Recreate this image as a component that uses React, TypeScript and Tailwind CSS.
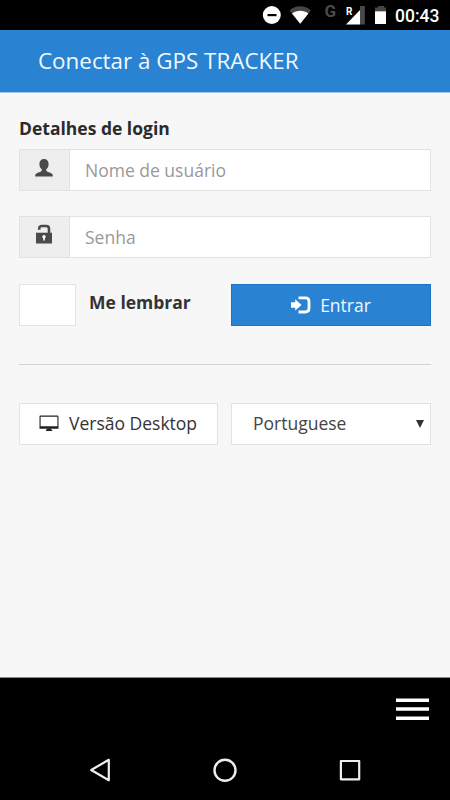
import type { ReactNode } from 'react';

function StatusBar() {
  return (
    <div className="flex h-[30px] shrink-0 items-center justify-end bg-black pr-[10px]">
      <svg width="124" height="30" viewBox="262 0 124 30">
        <circle cx="271.8" cy="15" r="9" fill="#fff" />
        <rect x="267.5" y="14" width="9" height="2.2" fill="#000" />
        <path d="M289.5 10.4C295.8 4.8 304.6 4.8 310.9 10.4L300.2 23.8Z" fill="#464646" />
        <path d="M292 13.5C297 9.7 303.4 9.7 308.4 13.5L300.2 23.8Z" fill="#fff" />
        <text x="324.5" y="16.8" fill="#4a4a4a" fontFamily="Roboto" fontSize="17" fontWeight="700">G</text>
        <path d="M360 6V24.5H364.8V6Z" fill="#4a4a4a" />
        <path d="M346 24.5L360 10V24.5Z" fill="#fff" />
        <text x="346" y="14.7" fill="#fff" fontFamily="Roboto" fontSize="10" fontWeight="700">R</text>
        <path d="M375 7.5H378V6H384V7.5H386.8V11.5H375Z" fill="#464646" />
        <rect x="375" y="11.3" width="12" height="12.7" fill="#fff" />
      </svg>
      <span className="ml-[9px] w-[45px] whitespace-nowrap pt-px font-[Roboto] text-[17.5px] font-medium leading-[30px] text-white">00:43</span>
    </div>
  );
}

function UserIcon() {
  return (
    <svg width="18" height="18" viewBox="0 0 18 18" fill="#4a4a4a">
      <path d="M9 0C6 0 4.4 2 4.4 5.1C4.4 7.5 5.300 9.300 6.700 10.300C7 11.500 6.600 12.300 5.500 12.700L2.200 14C.9 14.500.2 15.300.2 17.400H17.800C17.800 15.300 17.100 14.500 15.800 14L12.500 12.700C11.400 12.300 11 11.500 11.300 10.300C12.700 9.300 13.600 7.500 13.600 5.100C13.600 2 12 0 9 0Z" />
    </svg>
  );
}

function UnlockIcon() {
  return (
    <svg width="16" height="20" viewBox="0 0 16 20">
      <path d="M3.2 5.700V4.800Q3.200 2 6 2H10.200Q13 2 13 4.800V9" fill="none" stroke="#4a4a4a" strokeWidth="2.600" />
      <path d="M0 8.700H16V19.500H0Z" fill="#4a4a4a" />
      <circle cx="8" cy="12.800" r="1.700" fill="#fff" />
      <path d="M7.300 13H8.900V16.500H7.300Z" fill="#fff" />
    </svg>
  );
}

function LoginIcon() {
  return (
    <svg width="20" height="18" viewBox="0 0 20 18">
      <path d="M0 6.300H4.200V3.300L10.600 9L4.200 14.500V11.700H0Z" fill="#fff" />
      <path d="M7.500 1.900H14.300Q18 1.900 18 5.200V12.600Q18 16 14.300 16H7.500" fill="none" stroke="#fff" strokeWidth="2.800" />
    </svg>
  );
}

function DesktopIcon() {
  return (
    <svg width="20" height="17" viewBox="0 0 20 17" fill="#222">
      <path fillRule="evenodd" d="M1.300.5H18.300Q19.500.5 19.500 1.700V13.700H.5V1.700Q.5.500 1.300.5ZM1.600 1.700V11.200H18.400V1.700Z" />
      <path d="M7.700 13.500H12.300V14.800H13.200V16H7V14.800H7.700Z" />
    </svg>
  );
}

function Field({ icon, placeholder, type }: { icon: ReactNode; placeholder: string; type: string }) {
  return (
    <div className="flex h-[42px] border border-[#e2e2e2] bg-white">
      <div className="flex w-[50px] shrink-0 justify-center border-r border-[#e2e2e2] bg-[#eee]">{icon}</div>
      <input
        type={type}
        placeholder={placeholder}
        className="min-w-0 flex-1 px-[15px] text-[17.5px] outline-none placeholder:text-[#999]"
      />
    </div>
  );
}

export default function App() {
  return (
    <div className="flex h-[800px] w-[450px] flex-col overflow-hidden bg-[#f7f7f7] font-['Open_Sans',sans-serif] text-[#333]">
      <StatusBar />
      <header className="flex h-[63px] shrink-0 items-center border-b border-[#a3c9ea] bg-[#2a82d2] pl-[38px]">
        <h1 className="whitespace-nowrap text-[22.4px] text-[#effaff]">Conectar à GPS TRACKER</h1>
      </header>

      <main className="flex flex-1 flex-col px-[19px] pt-[22px]">
        <h2 className="mb-[8px] text-[17.5px] font-bold leading-[26px] text-[#2b2b2b]">Detalhes de login</h2>
        <Field type="text" placeholder="Nome de usuário" icon={<span className="pt-[9px] pr-px"><UserIcon /></span>} />
        <div className="h-[25px]" />
        <Field type="password" placeholder="Senha" icon={<span className="pt-[7px] pr-[2px]"><UnlockIcon /></span>} />

        <div className="mt-[26px] flex h-[42px]">
          <div className="w-[57px] border border-[#e2e2e2] bg-white" />
          <span className="ml-[13px] w-[142px] pt-[5px] text-[17.5px] font-bold leading-[26px]">Me lembrar</span>
          <button className="flex w-[200px] items-center justify-center border border-[#1c74c6] bg-[#2a82d2] text-[17.5px] text-[#effaff]">
            <LoginIcon />
            <span className="ml-[9px]">Entrar</span>
          </button>
        </div>

        <hr className="mt-[38px] border-[#d2d2d2]" />

        <div className="mt-[38px] flex h-[42px] gap-[13px]">
          <button className="flex w-[199px] items-center border border-[#e2e2e2] bg-white pb-px pl-[19px] text-[17.5px]">
            <DesktopIcon />
            <span className="ml-[10px]">Versão Desktop</span>
          </button>
          <div className="flex flex-1 items-center justify-between border border-[#e2e2e2] bg-white pb-px pl-[21px] pr-[6px] text-[17.5px] text-[#444]">
            <span>Portuguese</span>
            <svg width="8" height="8" viewBox="0 0 8 8" fill="#333">
              <path d="M0 0H8L4 8Z" />
            </svg>
          </div>
        </div>
      </main>

      <footer className="flex h-[123px] shrink-0 flex-col border-t border-[#888] bg-black">
        <div className="flex h-[62px] items-center justify-end pr-[21px]">
          <svg width="33" height="24" viewBox="0 0 33 24" fill="#fff">
            <path d="M0 1.500H33V5H0ZM0 10.300H33V13.800H0ZM0 19.500H33V23H0Z" />
          </svg>
        </div>
        <nav className="flex h-[60px] items-center justify-between px-[88px] pb-px">
          <svg width="24" height="26" viewBox="0 0 24 26" fill="none" stroke="#eee" strokeWidth="2.200" strokeLinejoin="round">
            <path d="M3.200 13L20.800 2.800V23.200Z" />
          </svg>
          <svg width="26" height="26" viewBox="0 0 26 26" fill="none" stroke="#eee" strokeWidth="2.400">
            <circle cx="13" cy="13.300" r="10.500" />
          </svg>
          <svg width="24" height="26" viewBox="0 0 24 26" fill="none" stroke="#eee" strokeWidth="2.200" strokeLinejoin="round">
            <rect x="2.900" y="4" width="18.300" height="18.300" />
          </svg>
        </nav>
      </footer>
    </div>
  );
}
